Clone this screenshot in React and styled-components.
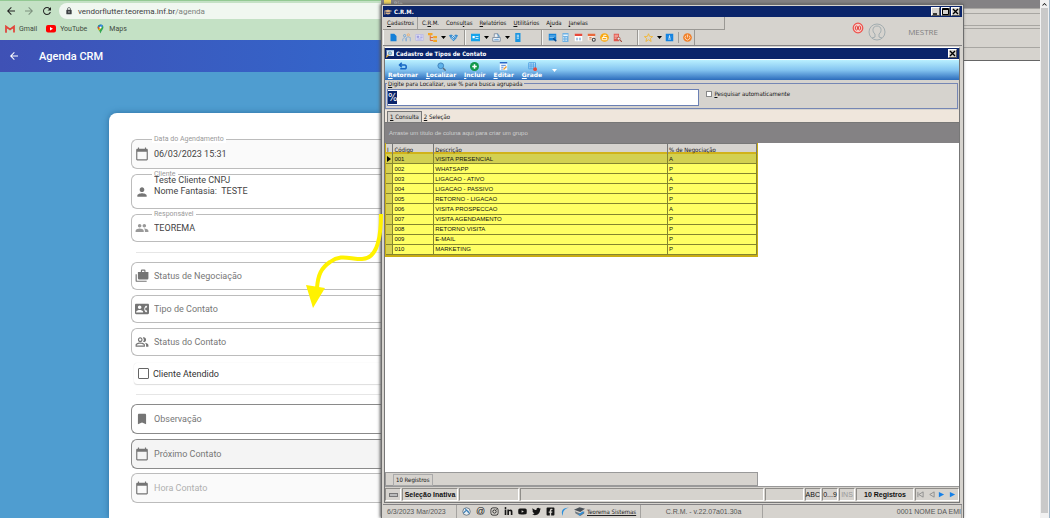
import { useEffect, useRef } from "react";
import styled, { createGlobalStyle } from "styled-components";
import {
  MdArrowBack,
  MdArrowForward,
  MdRefresh,
  MdLock,
  MdCalendarToday,
  MdPerson,
  MdPeople,
  MdContactPhone,
  MdOutlinePeopleAlt,
  MdBookmark,
  MdKeyboardArrowUp,
} from "react-icons/md";
import { FaInstagram, FaLinkedinIn, FaYoutube, FaTwitter, FaFacebookSquare, FaGraduationCap } from "react-icons/fa";

const CasesIcon = () => (
  <svg width="14" height="14" viewBox="0 0 24 24" fill="currentColor">
    <path d="M3 9H1v11a2 2 0 0 0 2 2h17v-2H3z" />
    <path fillRule="evenodd" d="M18 5V3a2 2 0 0 0-2-2h-4a2 2 0 0 0-2 2v2H5v11a2 2 0 0 0 2 2h14a2 2 0 0 0 2-2V5zM12 3h4v2h-4z" />
  </svg>
);

const fields = [
  { id: "data", label: "Data do Agendamento", value: "06/03/2023 15:31", icon: MdCalendarToday, height: 30, tone: "#fafafa", top: 0 },
  { id: "cliente", label: "Cliente", value: "Teste Cliente CNPJ\nNome Fantasia:  TESTE", icon: MdPerson, height: 35, top: 5 },
  { id: "responsavel", label: "Responsável", value: "TEOREMA", icon: MdPeople, height: 28, top: 5, soft: true },
];

const selects = [
  { id: "status-negociacao", text: "Status de Negociação", icon: CasesIcon, height: 28, top: 9 },
  { id: "tipo-contato", text: "Tipo de Contato", icon: MdContactPhone, height: 28, top: 5 },
  { id: "status-contato", text: "Status do Contato", icon: MdOutlinePeopleAlt, height: 28, top: 5 },
];

const extras = [
  { id: "observacao", text: "Observação", icon: MdBookmark, height: 30, top: 9, line: "#8a8a8a" },
  { id: "proximo", text: "Próximo Contato", icon: MdCalendarToday, height: 30, top: 5, line: "#8a8a8a", tone: "#f4f4f4" },
  { id: "hora", text: "Hora Contato", icon: MdCalendarToday, height: 30, top: 4, tone: "#fafafa", faded: true },
];

const rows = [
  ["001", "VISITA PRESENCIAL", "A"],
  ["002", "WHATSAPP", "P"],
  ["003", "LIGACAO - ATIVO", "A"],
  ["004", "LIGACAO - PASSIVO", "P"],
  ["005", "RETORNO - LIGACAO", "P"],
  ["006", "VISITA PROSPECCAO", "A"],
  ["007", "VISITA AGENDAMENTO", "P"],
  ["008", "RETORNO VISITA", "P"],
  ["009", "E-MAIL", "P"],
  ["010", "MARKETING", "P"],
];

const menus = [
  ["", "C", "adastros"],
  ["C.", "R", ".M."],
  ["Consu", "l", "tas"],
  ["", "R", "elatórios"],
  ["", "U", "tilitários"],
  ["A", "j", "uda"],
  ["", "J", "anelas"],
];

const glyphs = {
  page: <path d="M2 1h5l3 3v7H2z" fill="#1580d8" />,
  people: (
    <>
      <circle cx="3.5" cy="3.5" r="1.5" fill="none" stroke="#5b9bd5" />
      <circle cx="8.5" cy="2.5" r="1.5" fill="none" stroke="#f0a860" />
      <path d="M1 11V8l2-2 2 2v3M6 11V6l2-1 3 1v5" fill="none" stroke="#7ba7d8" />
    </>
  ),
  idcard: (
    <>
      <path d="M1 2h10v8H1z" fill="#dcdcf2" stroke="#b7b7e4" />
      <path d="M3 4h2v2H3zM7 4h3M7 6h3M3 8h6" fill="#8b8bd8" stroke="#9d9ddd" />
    </>
  ),
  tree: (
    <>
      <path d="M3 3v7h4M3 6h4" fill="none" stroke="#e2622d" strokeWidth="1.2" />
      <path d="M0 0h6v3H0zM7 4h5v3H7zM7 9h5v3H7z" fill="#f5a623" />
    </>
  ),
  shake: (
    <>
      <path d="M0 3l3-1 3 2 3-2 3 1-2 4-4 4-4-4z" fill="#3b8ed0" />
      <path d="M4 4l3 3M6 3l3 3M3 6l3 3" stroke="#fff" />
    </>
  ),
  card: (
    <>
      <path d="M0 1h12v10H0z" fill="#16a3ea" />
      <path d="M2 4h3v3H2zM6 4h4v1H6zM6 7h4v1H6z" fill="#fff" />
    </>
  ),
  print: (
    <>
      <path d="M3 5V1h5v4M1 6h10v5H1z" fill="#eef4fa" stroke="#6b7d93" />
      <path d="M7 2l3 2-3 3M3 9h6" fill="none" stroke="#2f87d0" />
    </>
  ),
  phone: (
    <>
      <path d="M3 0h7v12H3z" fill="#1b95e0" />
      <path d="M5 3h3M5 5h3M5 7h3" stroke="#fff" />
    </>
  ),
  board: (
    <>
      <path d="M1 1h10v9H1z" fill="#1583d8" />
      <path d="M2 4h8M2 6h6" stroke="#9bd1f7" />
      <path d="M7 7l4 4" stroke="#0b4c92" strokeWidth="2" />
    </>
  ),
  calc: (
    <>
      <path d="M2 0h8v12H2z" fill="#6fb1e4" />
      <path d="M3 2h6v2H3z" fill="#e8f4fd" />
      <path d="M3 6h6M3 8h6M3 10h6" stroke="#fff" strokeDasharray="1 1" />
    </>
  ),
  cal: (
    <>
      <path d="M1 2h10v9H1z" fill="#fff" />
      <path d="M1 1h10v3H1z" fill="#e8483a" />
      <path d="M3 7h2M7 7h2M3 9h2M7 9h2" stroke="#2c78c0" />
    </>
  ),
  calset: (
    <>
      <path d="M1 2h9v8H1z" fill="#f8eadf" />
      <path d="M1 1h10v3H1z" fill="#e8683a" />
      <path d="M3 6h3M3 8h3" stroke="#c76a3c" />
      <circle cx="9" cy="9" r="2" fill="#eee" stroke="#444" strokeWidth="1.4" />
    </>
  ),
  coin: (
    <>
      <circle cx="6" cy="6" r="5.8" fill="#f9a80f" />
      <path d="M3 6h6v3H3zM5 6V3h3v1" fill="none" stroke="#fff" strokeWidth="1.2" />
    </>
  ),
  report: (
    <>
      <path d="M1 1h7v10H1z" fill="#e2574c" />
      <path d="M2 3h5M2 5h5M2 7h3" stroke="#fbd0cb" />
      <circle cx="7.5" cy="7.5" r="2" fill="#eee" stroke="#a04436" />
      <path d="M9 9l3 3" stroke="#a04436" strokeWidth="1.4" />
    </>
  ),
  star: <path d="M6 1l1.5 3.5 4 .3-3 2.500 1 4L6 9l-3.500 2.300 1-4-3-2.500 4-.3z" fill="none" stroke="#f7b21b" />,
  box: (
    <>
      <path d="M1 1h10v10H1z" fill="#1583e0" />
      <path d="M4 8h4M6 3v3M4.500 5L6 6.500 7.500 5" fill="none" stroke="#fff" />
    </>
  ),
  power: (
    <>
      <circle cx="6" cy="6" r="5.8" fill="#f0802a" />
      <path d="M4 3.500a3.200 3.200 0 1 0 4 0M6 2v4" fill="none" stroke="#ffe3c8" strokeWidth="1.1" />
    </>
  ),
  back: <path d="M5 1L2 4l3 3M2 4h7q2 0 2 2.500T9 9H3" fill="none" stroke="#1767c4" strokeWidth="2" />,
  find: (
    <>
      <circle cx="5" cy="5" r="3.8" fill="#5fb2ea" stroke="#3c7fb8" strokeWidth="1.2" />
      <path d="M8 8l3.500 3.500" stroke="#5b6a78" strokeWidth="1.8" />
    </>
  ),
  windowFind: (
    <>
      <path d="M1 0h11v9H1z" fill="#e9f1f8" />
      <path d="M1 0h11v2H1z" fill="#9fc4e2" />
      <circle cx="6" cy="5" r="2.500" fill="#8fcaf0" stroke="#5a7d98" />
      <path d="M4 7l-4 4" stroke="#e0a93c" strokeWidth="2" />
    </>
  ),
  add: (
    <>
      <circle cx="6" cy="6" r="6" fill="#12984c" />
      <path d="M6 3v6M3 6h6" stroke="#fff" strokeWidth="2" />
    </>
  ),
  edit: (
    <>
      <path d="M1 0h10v11H1z" fill="#f4f9ff" />
      <path d="M1 0h10v2H1z" fill="#2767c8" />
      <path d="M3 4.500h6M3 7h3M3 9.500h2" stroke="#2767c8" />
      <path d="M6 10l4-4" stroke="#f39b2a" strokeWidth="1.6" />
    </>
  ),
  grid: (
    <>
      <path d="M1 1h9v8H1zM4 1v8M7 1v8M1 4h9M1 6.500h9" fill="#d7edff" stroke="#3390dc" />
      <circle cx="9.5" cy="9.5" r="2.5" fill="#e2483c" />
    </>
  ),
};

const Glyph = ({ name, size = 10 }) => (
  <svg width={size} height={size} viewBox="0 0 12 12" aria-hidden="true">
    {glyphs[name]}
  </svg>
);

const toolGroups = [
  { end: 4, items: ["page", "people", "idcard", "tree", "caret", "shake"] },
  { end: 17, items: ["card", "caret", "print", "caret", "phone"] },
  { end: 13, items: ["board", "calc", "cal", "calset", "coin", "report"] },
  { end: 0, items: ["star", "caret", "box", "sep", "power"] },
];

const actions = [
  ["back", "R", "etornar"],
  ["find", "L", "ocalizar"],
  ["add", "I", "ncluir"],
  ["edit", "E", "ditar"],
  ["grid", "G", "rade"],
];

const Field = ({ id, label, value, icon: Icon, height, tone, top, soft }) => (
  <Outlined $height={height} $tone={tone} $top={top}>
    <FieldLabel htmlFor={id}>{label}</FieldLabel>
    <IconSlot $soft={soft}>
      <Icon />
    </IconSlot>
    {value.includes("\n") ? (
      <FieldArea id={id} rows={2} defaultValue={value} />
    ) : (
      <FieldInput id={id} defaultValue={value} />
    )}
  </Outlined>
);

const PlainField = ({ id, text, icon: Icon, height, tone, top, line, faded }) => (
  <Outlined $height={height} $tone={tone} $top={top} $line={line}>
    <IconSlot>
      <Icon />
    </IconSlot>
    <FieldInput id={id} placeholder={text} aria-label={text} $faded={faded} />
  </Outlined>
);

const BrowserPane = () => (
  <Browser>
    <BrowserBar>
      <AddressRow>
        <NavButton aria-label="Voltar"><MdArrowBack /></NavButton>
        <NavButton aria-label="Avançar" $dim><MdArrowForward /></NavButton>
        <NavButton aria-label="Recarregar"><MdRefresh /></NavButton>
        <Address>
          <MdLock />
          <span>vendorflutter.teorema.inf.br<i>/agenda</i></span>
        </Address>
      </AddressRow>
      <Bookmarks>
        <Bookmark href="#gmail">
          <svg width="10" height="8" viewBox="0 0 20 16">
            <path d="M2 15V3l8 6 8-6v12" fill="none" stroke="#e2453a" strokeWidth="3.5" />
            <path d="M2 15V5" stroke="#d8574e" strokeWidth="3.5" />
          </svg>
          Gmail
        </Bookmark>
        <Bookmark href="#youtube">
          <svg width="10" height="8" viewBox="0 0 20 16">
            <rect width="20" height="15" rx="4" fill="#f00" />
            <path d="M8 4l6 3.500L8 11z" fill="#fff" />
          </svg>
          YouTube
        </Bookmark>
        <Bookmark href="#maps">
          <svg width="9" height="10" viewBox="0 0 20 20">
            <path d="M10 0a6.500 6.500 0 0 1 6.500 6.500C16.500 11 12 13 10 20 8 13 3.500 11 3.500 6.500A6.500 6.500 0 0 1 10 0z" fill="#34a853" />
            <path d="M10 0a6.500 6.500 0 0 1 5.500 3L10 9z" fill="#4285f4" />
            <path d="M10 0L4 4l2 3 4-3z" fill="#1a73e8" />
            <path d="M3.500 6.500L6 4l2 3-3 4z" fill="#ea4335" />
            <path d="M5 11l5-5 1 3-4 5z" fill="#fbbc04" />
            <circle cx="10" cy="6.5" r="2.3" fill="#fff" />
          </svg>
          Maps
        </Bookmark>
      </Bookmarks>
    </BrowserBar>
    <AppBar>
      <NavButton aria-label="Voltar" $light><MdArrowBack /></NavButton>
      <h1>Agenda CRM</h1>
    </AppBar>
    <Page>
      <Card>
        {fields.map((f) => <Field key={f.id} {...f} />)}
        <Rule />
        {selects.map((f) => <PlainField key={f.id} {...f} />)}
        <CheckCard>
          <input type="checkbox" />
          Cliente Atendido
        </CheckCard>
        <Rule />
        {extras.map((f) => <PlainField key={f.id} {...f} />)}
      </Card>
    </Page>
    <Arrow viewBox="0 0 80 100" aria-hidden="true">
      <path d="M76 4C76 32 71 49 57 49C44 49 36 44 25 52C16 58 13 65 12 78" fill="none" stroke="#fff200" strokeWidth="4" />
      <path d="M1 75L20 78L8 98Z" fill="#fff200" />
    </Arrow>
  </Browser>
);

const Caret = ({ light, label }) => (
  <CaretButton aria-label={label}>
    <svg width="5" height="3" viewBox="0 0 5 3"><path d="M0 0h5L2.500 3z" fill={light ? "#fff" : "#000"} /></svg>
  </CaretButton>
);

const CrmHeader = () => (
  <Header>
    <Bars>
      <MenuBar>
        {menus.map(([a, u, b]) => (
          <MenuButton key={a + u + b}>{a}<u>{u}</u>{b}</MenuButton>
        ))}
      </MenuBar>
      <Tools>
        {toolGroups.map((g) => (
          <ToolGroup key={g.items[0]} $end={g.end}>
            {g.items.map((name, i) => {
              if (name === "sep") return <Separator key={i} />;
              if (name === "caret") return <Caret key={i} label="Mais opções" />;
              return <ToolButton key={i} aria-label={name}><Glyph name={name} size={9} /></ToolButton>;
            })}
          </ToolGroup>
        ))}
      </Tools>
    </Bars>
    <User>
      <svg width="34" height="20" viewBox="0 0 34 20">
        <circle cx="6" cy="6" r="4.8" fill="#f6cdc8" stroke="#ef4f4a" strokeWidth="1.2" />
        <ellipse cx="4.5" cy="6" rx="1.2" ry="2" fill="none" stroke="#e2413c" />
        <ellipse cx="7.5" cy="6" rx="1.2" ry="2" fill="none" stroke="#e2413c" />
        <circle cx="25" cy="10" r="8" fill="none" stroke="#a3adb0" />
        <path d="M20 16l3-1v-3c-3-2-3-8 2-8s5 6 2 8v3l3 1" fill="none" stroke="#a3adb0" />
      </svg>
      <span>MESTRE</span>
    </User>
  </Header>
);

const Grid = () => (
  <GridArea>
    <Table>
      <colgroup>
        <col width="2%" />
        <col width="11%" />
        <col width="63%" />
        <col width="24%" />
      </colgroup>
      <thead>
        <tr>
          <Th aria-label="Indicador">I</Th>
          <Th>Código</Th>
          <Th>Descrição</Th>
          <Th>% de Negociação</Th>
        </tr>
      </thead>
      <tbody>
        {rows.map(([code, name, kind], i) => (
          <Row key={code} $active={i === 0}>
            <td>
              {i === 0 && <svg width="4" height="6" viewBox="0 0 4 6"><path d="M0 0l4 3-4 3z" /></svg>}
            </td>
            <td>{code}</td>
            <td>{name}</td>
            <td>{kind}</td>
          </Row>
        ))}
      </tbody>
    </Table>
    <GridFooter><span>10 Registros</span></GridFooter>
  </GridArea>
);

const ChildWindow = () => {
  const search = useRef(null);

  useEffect(() => {
    search.current.focus();
    search.current.select();
  }, []);

  return (
    <Child>
      <TitleBar>
        <Glyph name="windowFind" size={8} />
        <b>Cadastro de Tipos de Contato</b>
        <WinButton aria-label="Fechar">
          <svg width="7" height="7" viewBox="0 0 7 7"><path d="M1 1l5 5M6 1L1 6" stroke="#000" strokeWidth="1.4" /></svg>
        </WinButton>
      </TitleBar>
      <ActionBar>
        {actions.map(([icon, u, b]) => (
          <Action key={icon}>
            <Glyph name={icon} size={9} />
            <span><u>{u}</u>{b}</span>
          </Action>
        ))}
        <Caret light label="Mais ações" />
      </ActionBar>
      <SearchBox>
        <legend><label htmlFor="busca"><u>D</u>igite para Localizar, use % para busca agrupada</label></legend>
        <SearchInput id="busca" ref={search} defaultValue="%" />
        <AutoSearch>
          <input type="checkbox" />
          <span><u>P</u>esquisar automaticamente</span>
        </AutoSearch>
      </SearchBox>
      <Tabs role="tablist">
        <Tab role="tab" aria-selected="true" $active><u>1</u> Consulta</Tab>
        <Tab role="tab" aria-selected="false"><u>2</u> Seleção</Tab>
      </Tabs>
      <GroupBar>Arraste um título de coluna aqui para criar um grupo</GroupBar>
      <Grid />
      <StatusRow>
        <StatusCell $basis="16px"><Knob /></StatusCell>
        <StatusCell $basis="56px" $bold>Seleção Inativa</StatusCell>
        <StatusCell $basis="60px" />
        <StatusCell $grow />
        <StatusCell $basis="39px" />
        <StatusCell $basis="16px">ABC</StatusCell>
        <StatusCell $basis="16px">0...9</StatusCell>
        <StatusCell $basis="16px" $off>INS</StatusCell>
        <StatusCell $basis="58px" $bold>10 Registros</StatusCell>
        <StatusCell $basis="44px">
          <Pager aria-label="Primeiro"><path d="M1 1v6M7 1v6L2 4z" fill="none" stroke="#8a8a8a" /></Pager>
          <Pager aria-label="Anterior"><path d="M7 1v6L2 4z" fill="none" stroke="#8a8a8a" /></Pager>
          <Pager aria-label="Próximo"><path d="M1 1v6l6-3z" fill="#1580e8" /></Pager>
          <Pager aria-label="Último"><path d="M1 1v6l6-3z" fill="#1580e8" /></Pager>
        </StatusCell>
      </StatusRow>
    </Child>
  );
};

const AppStatus = () => (
  <Footer>
    <FooterCell $basis="74px">6/3/2023 Mar/2023</FooterCell>
    <FooterCell $basis="184px">
      <Social>
        <a href="#site" aria-label="Site">
          <svg width="9" height="9" viewBox="0 0 12 12"><circle cx="6" cy="6" r="5" fill="#e7edf2" stroke="#53616e" /><path d="M2 8l4-4 3 3M4 2l6 7" fill="none" stroke="#3d7fb5" strokeWidth="1.5" /></svg>
        </a>
        <a href="#email" aria-label="E-mail">@</a>
        <a href="#instagram" aria-label="Instagram"><FaInstagram /></a>
        <a href="#linkedin" aria-label="LinkedIn"><FaLinkedinIn /></a>
        <a href="#youtube" aria-label="YouTube"><FaYoutube /></a>
        <a href="#twitter" aria-label="Twitter"><FaTwitter /></a>
        <a href="#facebook" aria-label="Facebook"><FaFacebookSquare /></a>
        <a href="#teorema" aria-label="Portal">
          <svg width="9" height="9" viewBox="0 0 12 12"><path d="M4 12C0 6 4 0 12 1 7 2 3 5 4 12z" fill="#2c8fdc" /></svg>
        </a>
        <a href="#cursos" aria-label="Cursos">
          <svg width="11" height="10" viewBox="0 0 14 12">
            <path d="M0 3l7-3 7 2-6 4z" fill="#4a5158" />
            <path d="M1 5l7 3 5-3v3l-5 3-6-3z" fill="#6f7981" />
            <path d="M6 10l6-4" stroke="#2c8fdc" strokeWidth="2" />
          </svg>
        </a>
      </Social>
      <SiteLink href="#sistemas">Teorema Sistemas</SiteLink>
    </FooterCell>
    <FooterCell $grow $align="center">C.R.M. - v.22.07a01.30a</FooterCell>
    <FooterCell $basis="199px" $align="flex-end">0001 NOME DA EMI</FooterCell>
  </Footer>
);

const App = () => (
  <>
    <GlobalStyle />
    <Desktop>
      <BrowserPane />
      <CrmColumn>
        <Behind><Folder />Rio</Behind>
        <CrmWindow>
          <TitleBar>
            <FaGraduationCap color="#d9b48a" size={8} />
            <b>C.R.M.</b>
            <WinButton aria-label="Minimizar">
              <svg width="7" height="7" viewBox="0 0 7 7"><path d="M1 6h4" stroke="#000" strokeWidth="1.5" /></svg>
            </WinButton>
            <WinButton aria-label="Maximizar">
              <svg width="7" height="7" viewBox="0 0 7 7"><path d="M.5.5h6v6h-6zM.5 1.500h6" fill="none" stroke="#000" /></svg>
            </WinButton>
            <WinButton aria-label="Fechar">
              <svg width="7" height="7" viewBox="0 0 7 7"><path d="M1 1l5 5M6 1L1 6" stroke="#000" strokeWidth="1.4" /></svg>
            </WinButton>
          </TitleBar>
          <CrmHeader />
          <ChildWindow />
          <AppStatus />
        </CrmWindow>
      </CrmColumn>
      <Remote>
        <RemoteBar $height={9} $dark />
        <RemoteBar $height={5} />
        <RemoteBar $height={12} />
        <RemoteBar $height={3} />
        <RemoteBar $height={19} />
        <RemoteBar $height={13} $last />
      </Remote>
      <ScrollBar>
        <button aria-label="Subir"><MdKeyboardArrowUp /></button>
        <Thumb />
      </ScrollBar>
    </Desktop>
  </>
);

export default App;

const ui = `"DejaVu Sans Condensed", "DejaVu Sans", sans-serif`;
const face = "#d6d3ce";
const navy = "#0a246a";

const GlobalStyle = createGlobalStyle`
  * { box-sizing: border-box; }
  body { margin: 0; background: #fff; }
  button {
    padding: 0;
    border: 0;
    background: none;
    color: inherit;
    font: inherit;
  }
  input, textarea { outline: none; font: inherit; color: inherit; }
  svg { display: block; flex: none; }
`;

const Desktop = styled.div`
  display: grid;
  grid-template-columns: minmax(0, 381fr) minmax(0, 583fr) minmax(0, 76fr) 10px;
  min-height: 100vh;
`;

const Browser = styled.section`
  position: relative;
  display: flex;
  flex-direction: column;
  font-family: Roboto, sans-serif;
`;

const BrowserBar = styled.header`
  height: 40px;
  padding-top: 2px;
  border-top: 1px solid #93c993;
  background: #c4e1c5;
`;

const AddressRow = styled.div`
  display: flex;
  align-items: center;
  gap: 6px;
  height: 16px;
  padding-left: 5px;
`;

const NavButton = styled.button`
  color: ${(p) => (p.$light ? "#fff" : p.$dim ? "#7d917e" : "#222")};
  font-size: 12px;
`;

const Address = styled.div`
  display: flex;
  flex: 1;
  align-items: center;
  gap: 5px;
  height: 16px;
  padding-left: 6px;
  border-radius: 8px 0 0 8px;
  background: #f0f7f0;
  color: #3c4043;
  font-size: 8px;

  i {
    color: #7c827d;
    font-style: normal;
  }
`;

const Bookmarks = styled.nav`
  display: flex;
  align-items: center;
  gap: 9px;
  height: 20px;
  padding-left: 5px;
`;

const Bookmark = styled.a`
  display: flex;
  align-items: center;
  gap: 4px;
  color: #3f4b40;
  font-size: 7px;
  text-decoration: none;
`;

const AppBar = styled.header`
  display: flex;
  align-items: center;
  gap: 19px;
  height: 32px;
  padding-left: 8px;
  background: linear-gradient(90deg, #3f51b5, #3367cc);
  box-shadow: 0 1px 1px #3a79b8;
  color: #fff;

  h1 {
    margin: 0;
    font-size: 11px;
    font-weight: 500;
  }
`;

const Page = styled.main`
  display: flex;
  flex: 1;
  padding: 41px 0 0 109px;
  overflow: hidden;
  background: #4f9dd0;
`;

const Card = styled.form`
  flex: 1;
  min-width: 0;
  padding: 26px 0 13px 22px;
  border-radius: 8px 0 0 0;
  background: #fff;
  box-shadow: 0 0 6px #2d6f9f;
`;

const Outlined = styled.div`
  position: relative;
  display: flex;
  align-items: center;
  min-width: 0;
  height: ${(p) => p.$height}px;
  margin: ${(p) => p.$top}px 0 0;
  padding: 0 0 0 3px;
  border: 1px solid ${(p) => p.$line || "#bcbcbc"};
  border-right: 0;
  border-radius: 6px 0 0 6px;
  background: ${(p) => p.$tone || "#fff"};
`;

/* sits on the outline of its field */
const FieldLabel = styled.label`
  position: absolute;
  top: -5px;
  left: 20px;
  padding: 0 2px;
  background: #fff;
  color: #9a9a9a;
  font-size: 7px;
  line-height: 8px;
`;

const IconSlot = styled.span`
  display: flex;
  width: 19px;
  color: ${(p) => (p.$soft ? "#999" : "#757575")};
  font-size: 14px;
`;

const FieldInput = styled.input`
  flex: 1;
  min-width: 0;
  padding: 0;
  border: 0;
  background: none;
  color: #444;
  font-size: 9px;

  &::placeholder {
    color: ${(p) => (p.$faded ? "#b0b0b0" : "#777")};
    opacity: 1;
  }
`;

const FieldArea = styled.textarea`
  z-index: 1;
  flex: 1;
  min-width: 0;
  height: 33px;
  padding: 0;
  border: 0;
  resize: none;
  overflow: hidden;
  background: none;
  color: #444;
  font-size: 9px;
  line-height: 11px;
`;

const Rule = styled.hr`
  height: 1px;
  margin: 10px 0 0 5px;
  border: 0;
  background: #e6e6e6;
`;

const CheckCard = styled.label`
  display: flex;
  align-items: center;
  gap: 4px;
  height: 21px;
  margin: 7px 0 4px 3px;
  padding-left: 4px;
  border-radius: 3px 0 0 3px;
  box-shadow: 0 1px 1px #ddd, 0 0 1px #ddd;
  color: #333;
  font-size: 9px;

  input {
    appearance: none;
    width: 11px;
    height: 11px;
    margin: 0;
    border: 1px solid #666;
    border-radius: 1px;
  }
`;

/* hand-drawn pointer from the grid to the contact type field */
const Arrow = styled.svg`
  position: absolute;
  top: 210px;
  right: -4px;
  z-index: 2;
  width: 80px;
  height: 100px;
`;

const CrmColumn = styled.section`
  display: flex;
  flex-direction: column;
  min-width: 0;
  background: #848284;
`;

const Behind = styled.div`
  display: flex;
  gap: 3px;
  height: 4px;
  padding-left: 3px;
  overflow: hidden;
  color: #ddd;
  font: 6px/8px ${ui};
`;

const Folder = styled.span`
  width: 7px;
  background: #f2d65c;
`;

const CrmWindow = styled.div`
  z-index: 1;
  display: flex;
  flex: 1;
  flex-direction: column;
  padding: 1px 1px 0;
  border: 1px solid #6d6d6d;
  border-bottom: 0;
  background: ${face};
  box-shadow: -1px 0 3px #555;
  color: #111;
  font: 6px/8px ${ui};
`;

const TitleBar = styled.div`
  display: flex;
  align-items: center;
  gap: 1px;
  height: 11px;
  padding: 0 2px 0 1px;
  background: ${navy};
  color: #fff;

  b {
    flex: 1;
    padding-left: 1px;
  }
`;

const WinButton = styled.button`
  display: grid;
  place-items: center;
  width: 9px;
  height: 9px;
  border: 1px solid;
  border-color: #fff #555 #555 #fff;
  background: ${face};
`;

const Header = styled.header`
  display: flex;
  height: 29px;
  border-bottom: 1px solid #848284;
`;

const Bars = styled.div`
  flex: 0 0 59%;
  min-width: 0;
`;

const MenuBar = styled.nav`
  display: flex;
  height: 13px;
  border: solid #9a9894;
  border-width: 0 1px 1px 0;
`;

const MenuButton = styled.button`
  padding: 0 3px 0 4px;
  white-space: nowrap;

  &:first-child {
    border-right: 1px solid #a09e9a;
  }
`;

const Tools = styled.div`
  display: flex;
  height: 15px;
`;

const ToolGroup = styled.div`
  display: flex;
  align-items: center;
  padding: 0 ${(p) => p.$end}px 0 4px;
  border: solid #9a9894;
  border-width: 0 1px 0 0;
  box-shadow: inset 1px 0 #f4f4f2;
`;

const ToolButton = styled.button`
  display: grid;
  place-items: center;
  width: 13px;
  height: 13px;
`;

const CaretButton = styled.button`
  display: grid;
  place-items: center;
  width: 8px;
  height: 8px;
`;

const Separator = styled.span`
  width: 1px;
  height: 11px;
  margin: 0 2px;
  background: #a09e9a;
`;

const User = styled.div`
  display: flex;
  flex: 1;
  align-items: center;
  justify-content: flex-end;
  gap: 22px;
  padding: 1px 24px 0 0;
  color: #808080;
  font: 8px "Open Sans", sans-serif;
`;

const Child = styled.section`
  display: flex;
  flex: 1;
  flex-direction: column;
  min-height: 0;
  margin: 1px 2px 1px 1px;
  border: 1px solid #777;
  border-top-color: #fff;
  background: ${face};
`;

const ActionBar = styled.div`
  display: flex;
  align-items: center;
  gap: 8px;
  height: 21px;
  padding-left: 3px;
  border-top: 1px solid #fff;
  background: linear-gradient(#b9f0ff, #84c4f0 50%, #2c6cbc);
  color: #fff;
  font: bold 6px/8px "DejaVu Sans", sans-serif;
`;

const Action = styled.button`
  display: flex;
  flex-direction: column;
  align-items: center;
`;

const SearchBox = styled.fieldset`
  display: flex;
  align-items: flex-start;
  gap: 7px;
  height: 29px;
  min-width: 0;
  margin: 0 1px 0 0;
  padding: 2px 2px 0 1px;
  border: 1px solid #7586b4;

  legend {
    padding: 0 1px;
    line-height: 7px;
  }
`;

const SearchInput = styled.input`
  width: 55%;
  height: 17px;
  padding: 0;
  border: 1px solid #6b80b4;
  background: #fff;
  font: 11px/13px ${ui};

  &::selection {
    background: ${navy};
    color: #fff;
  }
`;

const AutoSearch = styled.label`
  display: flex;
  align-items: center;
  gap: 2px;
  padding-top: 1px;

  input {
    appearance: none;
    width: 6px;
    height: 6px;
    margin: 0;
    border: 1px solid #888;
    background: #fff;
  }
`;

const Tabs = styled.div`
  display: flex;
  height: 13px;
  margin-top: 1px;
  padding: 1px 0 0 2px;
  border-bottom: 1px solid #777;
  background: #efe6dc;
`;

const Tab = styled.button`
  padding: 0 2px;
  border: ${(p) => (p.$active ? "1px solid #777" : "0")};
  border-bottom: 0;
  background: ${(p) => (p.$active ? face : "none")};
`;

const GroupBar = styled.div`
  height: 20px;
  padding-left: 4px;
  background: #848284;
  color: #cfcfcf;
  font: 6px/20px "Liberation Sans", sans-serif;
`;

const GridArea = styled.div`
  display: flex;
  flex: 1;
  flex-direction: column;
  justify-content: space-between;
  background: #fff;
`;

const Table = styled.table`
  width: 65%;
  height: 114px;
  table-layout: fixed;
  border-spacing: 0;
  border: solid #c9ad12;
  border-width: 0 1px 2px;
  font: 6px/8px "Liberation Sans", sans-serif;
`;

const Th = styled.th`
  height: 11px;
  padding: 0 1px;
  border: solid #777;
  border-width: 1px 1px 0 0;
  box-shadow: inset 0 -2px #d0b21a;
  overflow: hidden;
  background: ${face};
  font: 6px/7px ${ui};
  text-align: left;
`;

const Row = styled.tr`
  td {
    height: 10px;
    padding: 0 1px;
    border: solid #85852f;
    border-width: 0 1px 1px 0;
    background: ${(p) => (p.$active ? "#d3d051" : "#ffff63")};
  }

  td:first-child {
    background: #d6d052;
  }
`;

const GridFooter = styled.footer`
  width: 65%;
  height: 14px;
  padding: 1px 7px;
  border: 1px solid #999;
  background: ${face};
  line-height: 10px;

  span {
    display: inline-block;
    padding: 0 3px 0 2px;
    border: 1px solid #aaa;
  }
`;

const StatusRow = styled.footer`
  display: flex;
  gap: 1px;
  height: 16px;
  padding: 1px 0;
  border-top: 1px solid #999;
`;

const StatusCell = styled.div`
  display: flex;
  flex: ${(p) => (p.$grow ? "1" : `0 0 ${p.$basis}`)};
  align-items: center;
  justify-content: space-around;
  border: 1px solid;
  border-color: #8f8d89 #fff #fff #8f8d89;
  color: ${(p) => (p.$off ? "#999" : "#111")};
  font: ${(p) => (p.$bold ? "bold 7px" : "7px")} "Liberation Sans", sans-serif;
  white-space: nowrap;
`;

const Knob = styled.span`
  width: 9px;
  height: 4px;
  border: 1px solid #777;
  background: #bbb;
`;

const PagerButton = styled.button`
  width: 8px;
  height: 8px;
`;

const Pager = ({ children, ...rest }) => (
  <PagerButton {...rest}>
    <svg width="7" height="7" viewBox="0 0 8 8">{children}</svg>
  </PagerButton>
);

const Footer = styled.footer`
  display: flex;
  height: 14px;
  border-top: 1px solid #848284;
`;

const FooterCell = styled.div`
  display: flex;
  flex: ${(p) => (p.$grow ? "1" : `0 0 ${p.$basis}`)};
  align-items: center;
  justify-content: ${(p) => p.$align || "flex-start"};
  gap: 3px;
  padding-left: 4px;
  border-right: 1px solid #a5a3a0;
  color: #555;
  font: 7px "Liberation Sans", sans-serif;
  white-space: nowrap;
`;

const Social = styled.div`
  display: flex;
  gap: 5px;
  padding-left: 1px;

  a {
    width: 9px;
    color: #151515;
    font-size: 9px;
    line-height: 9px;
    text-decoration: none;
  }
`;

const SiteLink = styled.a`
  padding-left: 1px;
  color: #222;
  font: 6px ${ui};
`;

const Remote = styled.section`
  background: #fff;
`;

const RemoteBar = styled.div`
  height: ${(p) => p.$height}px;
  border-bottom: 1px solid ${(p) => (p.$last ? "#666" : "#a8a6a2")};
  background: ${(p) => (p.$dark ? "#848284" : face)};
`;

const ScrollBar = styled.aside`
  display: flex;
  flex-direction: column;
  padding-bottom: 5px;
  border-right: 1px solid #9fb4c6;
  background: #f1f1f1;

  button {
    height: 8px;
    font-size: 9px;
    line-height: 0;
  }
`;

const Thumb = styled.div`
  flex: 1;
  margin: 0 1px;
  background: #c9c9c9;
`;
